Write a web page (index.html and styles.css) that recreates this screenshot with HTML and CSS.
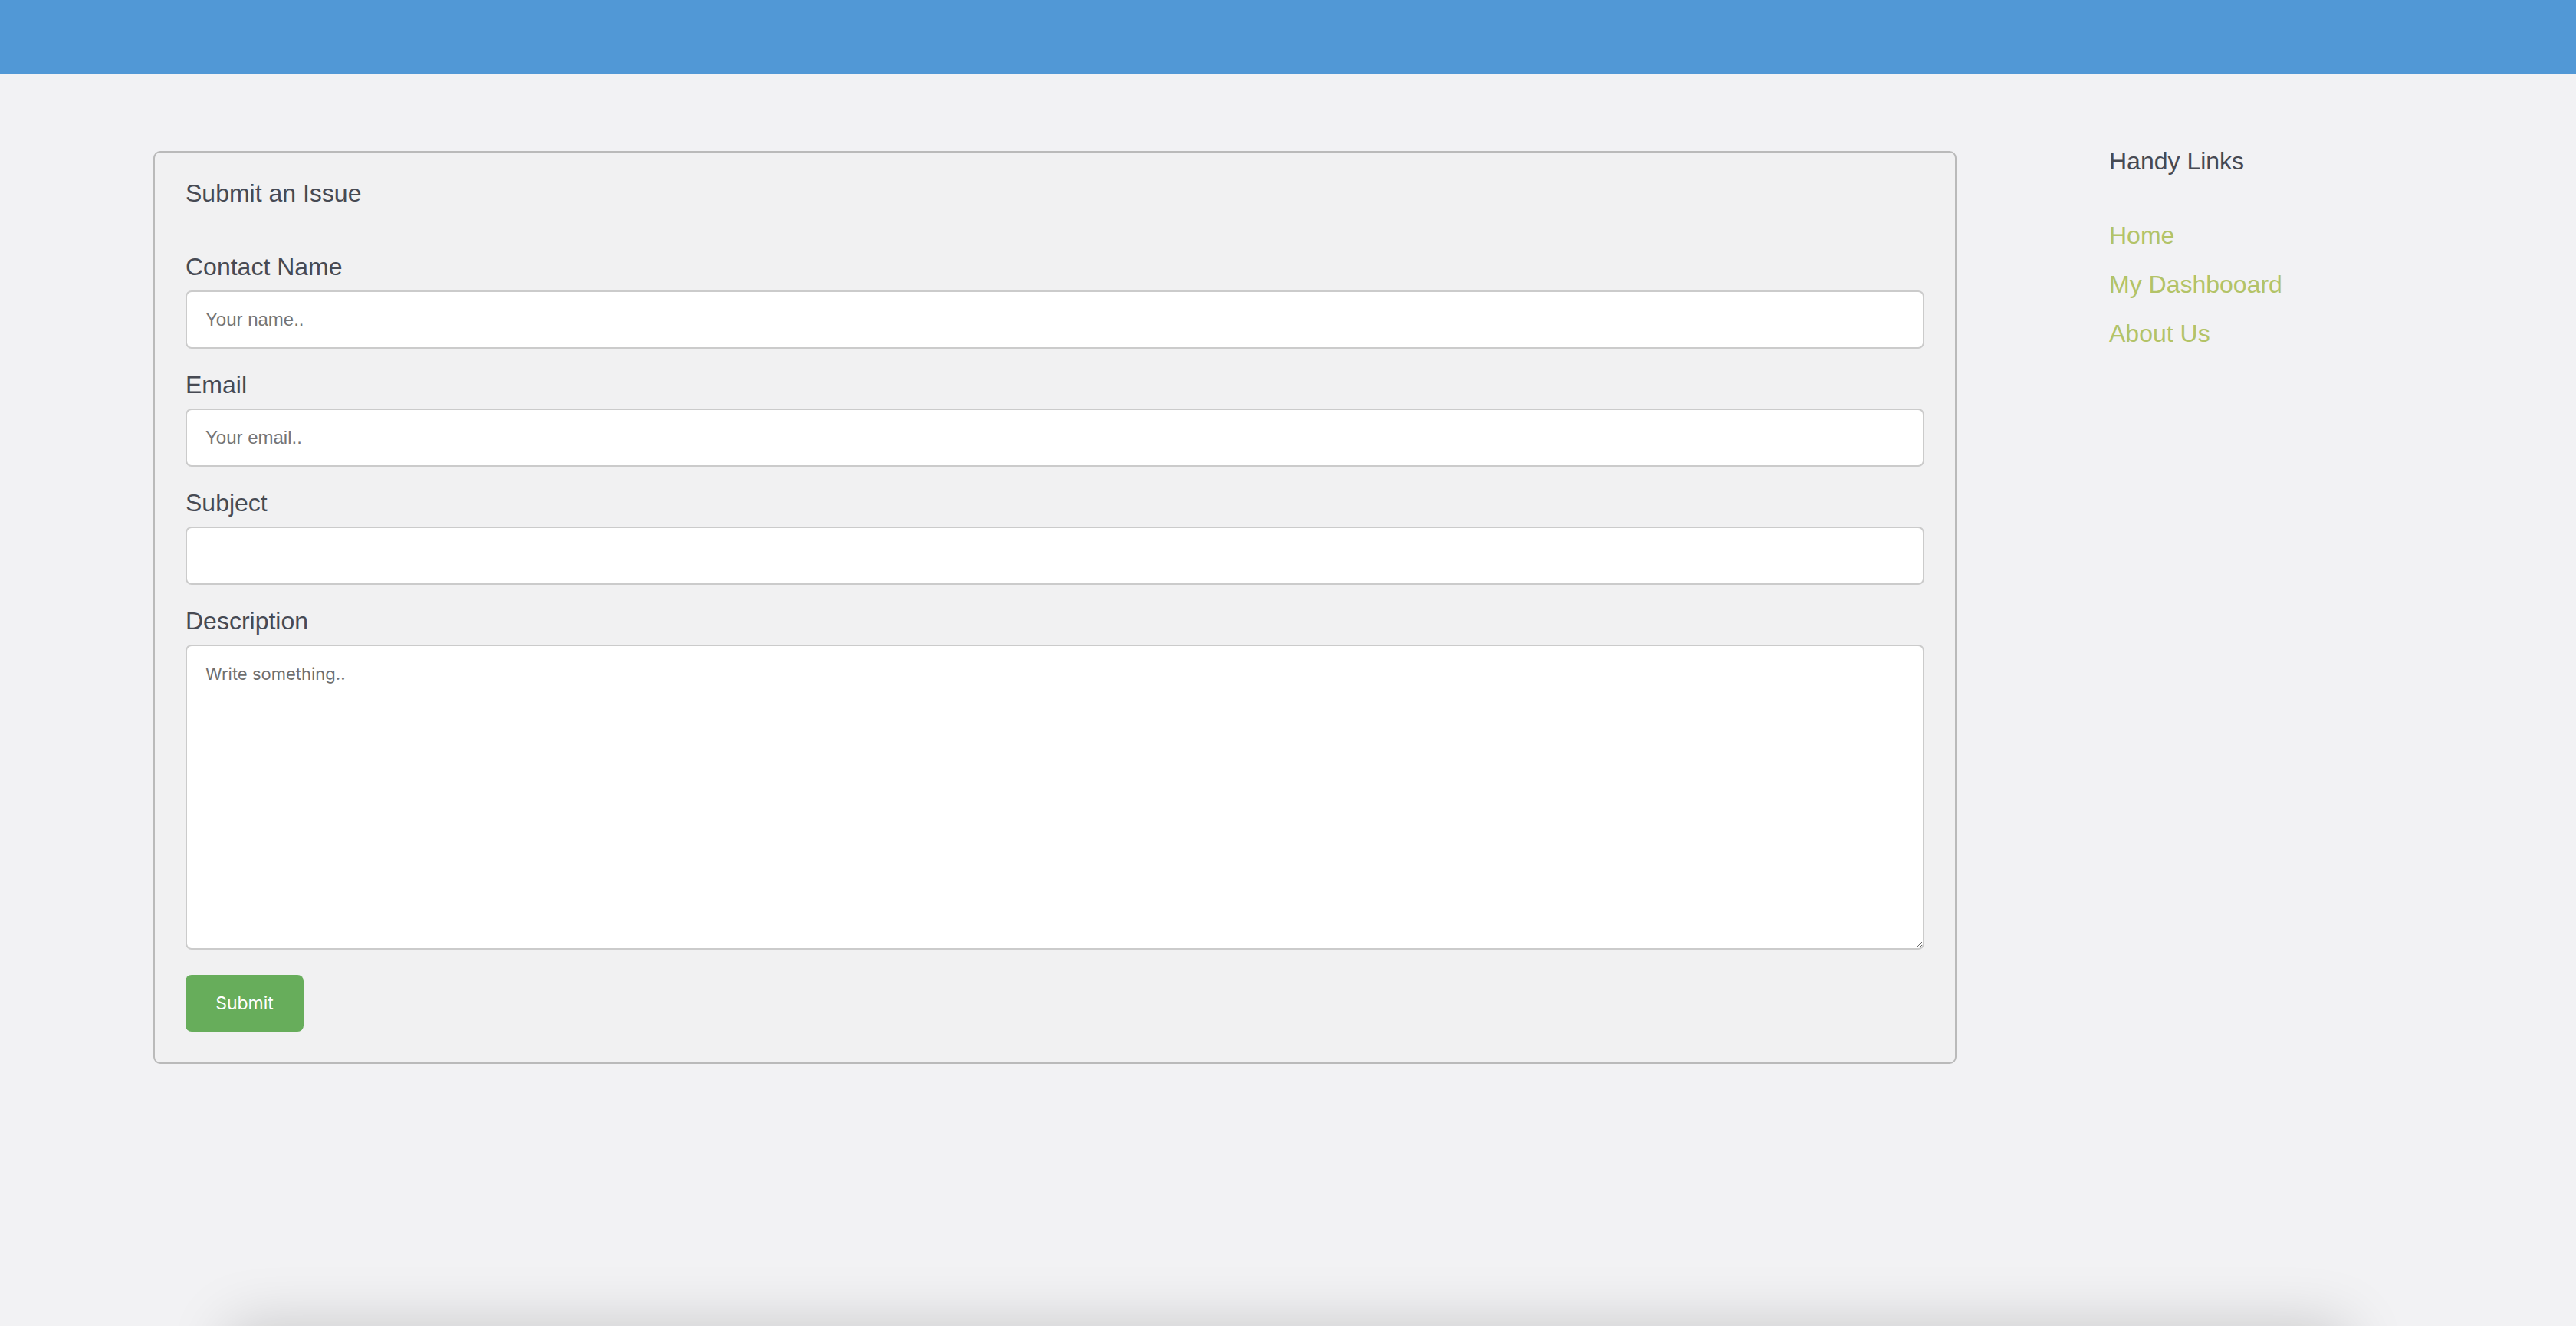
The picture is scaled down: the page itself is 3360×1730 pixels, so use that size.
FILE: index.html
```html
<!DOCTYPE html>
<html lang="en">
<head>
<meta charset="utf-8">
<title>Submit an Issue</title>
<link rel="stylesheet" href="styles.css">
</head>
<body>
<div class="app">
  <header class="topbar"></header>
  <main class="main">
    <section class="card">
      <h2 class="card-title">Submit an Issue</h2>
      <form class="form">
        <div class="field">
          <label class="label" for="name">Contact Name</label>
          <input class="input" id="name" type="text" placeholder="Your name..">
        </div>
        <div class="field">
          <label class="label" for="email">Email</label>
          <input class="input" id="email" type="text" placeholder="Your email..">
        </div>
        <div class="field">
          <label class="label" for="subject">Subject</label>
          <input class="input" id="subject" type="text">
        </div>
        <div class="field field-last">
          <label class="label" for="desc">Description</label>
          <textarea class="textarea" id="desc" placeholder="Write something.."></textarea>
        </div>
        <button class="submit" type="button">Submit</button>
      </form>
    </section>
    <aside class="sidebar">
      <h3 class="side-title">Handy Links</h3>
      <nav class="side-links">
        <a class="side-link" href="#">Home</a>
        <a class="side-link" href="#">My Dashbooard</a>
        <a class="side-link" href="#">About Us</a>
      </nav>
    </aside>
  </main>
</div>
<footer class="footer"></footer>
</body>
</html>
```

FILE: styles.css
```css
* {
  box-sizing: border-box;
}

html, body {
  margin: 0;
  padding: 0;
}

body {
  background: #f2f2f4;
  font-family: "Liberation Sans", Arial, Helvetica, sans-serif;
  color: #474a53;
}

.app {
  min-height: 100vh;
  display: flex;
  flex-direction: column;
}

.topbar {
  height: 96px;
  background: #5198d6;
  flex: none;
}

.main {
  flex: 1;
  display: flex;
  align-items: flex-start;
  padding: 96px 0 0 200px;
}

.card {
  flex: none;
  width: 2352px;
  margin-top: 5px;
  background: #f1f1f2;
  border: 2px solid #bababa;
  border-radius: 9px;
  padding: 35px 40px 40px 40px;
}

.card-title {
  margin: 0 0 59px 0;
  font-size: 32px;
  font-weight: normal;
  line-height: 37px;
  color: #474a53;
}

.form {
  display: flex;
  flex-direction: column;
  align-items: flex-start;
}

.field {
  width: 100%;
  margin-bottom: 29px;
}

.field-last {
  margin-bottom: 33px;
}

.label {
  display: block;
  font-size: 32px;
  line-height: 37px;
  margin-bottom: 12px;
  color: #474a53;
}

.input {
  display: block;
  width: 100%;
  height: 76px;
  border: 2px solid #cbcbcb;
  border-radius: 8px;
  background: #ffffff;
  padding: 0 24px;
  font-family: "Liberation Sans", Arial, sans-serif;
  font-size: 24px;
  color: #333;
  outline: none;
}

.input::placeholder {
  color: #757575;
}

.textarea {
  display: block;
  width: 100%;
  height: 398px;
  border: 2px solid #cbcbcb;
  border-radius: 8px;
  background: #ffffff;
  padding: 23px 24px;
  font-family: Inter, "Noto Sans", sans-serif;
  font-size: 22px;
  color: #333;
  resize: vertical;
  outline: none;
}

.textarea::placeholder {
  color: #6f6f6f;
}

.submit {
  width: 154px;
  height: 74px;
  border: none;
  border-radius: 8px;
  background: #67ad5b;
  color: #ffffff;
  font-family: Inter, Roboto, sans-serif;
  font-size: 23px;
  padding: 0;
  cursor: pointer;
}

.sidebar {
  flex: none;
  margin-left: 199px;
}

.side-title {
  margin: 0 0 60px 0;
  font-size: 32px;
  font-weight: normal;
  line-height: 37px;
  color: #474a53;
}

.side-links {
  display: flex;
  flex-direction: column;
  gap: 27px;
}

.side-link {
  display: block;
  font-size: 32px;
  line-height: 37px;
  color: #b3c367;
  text-decoration: none;
}

.footer {
  height: 200px;
  margin: 0 300px;
  background: #f2f2f4;
  box-shadow: 0 0 80px rgba(0, 0, 0, 0.18);
}
```
